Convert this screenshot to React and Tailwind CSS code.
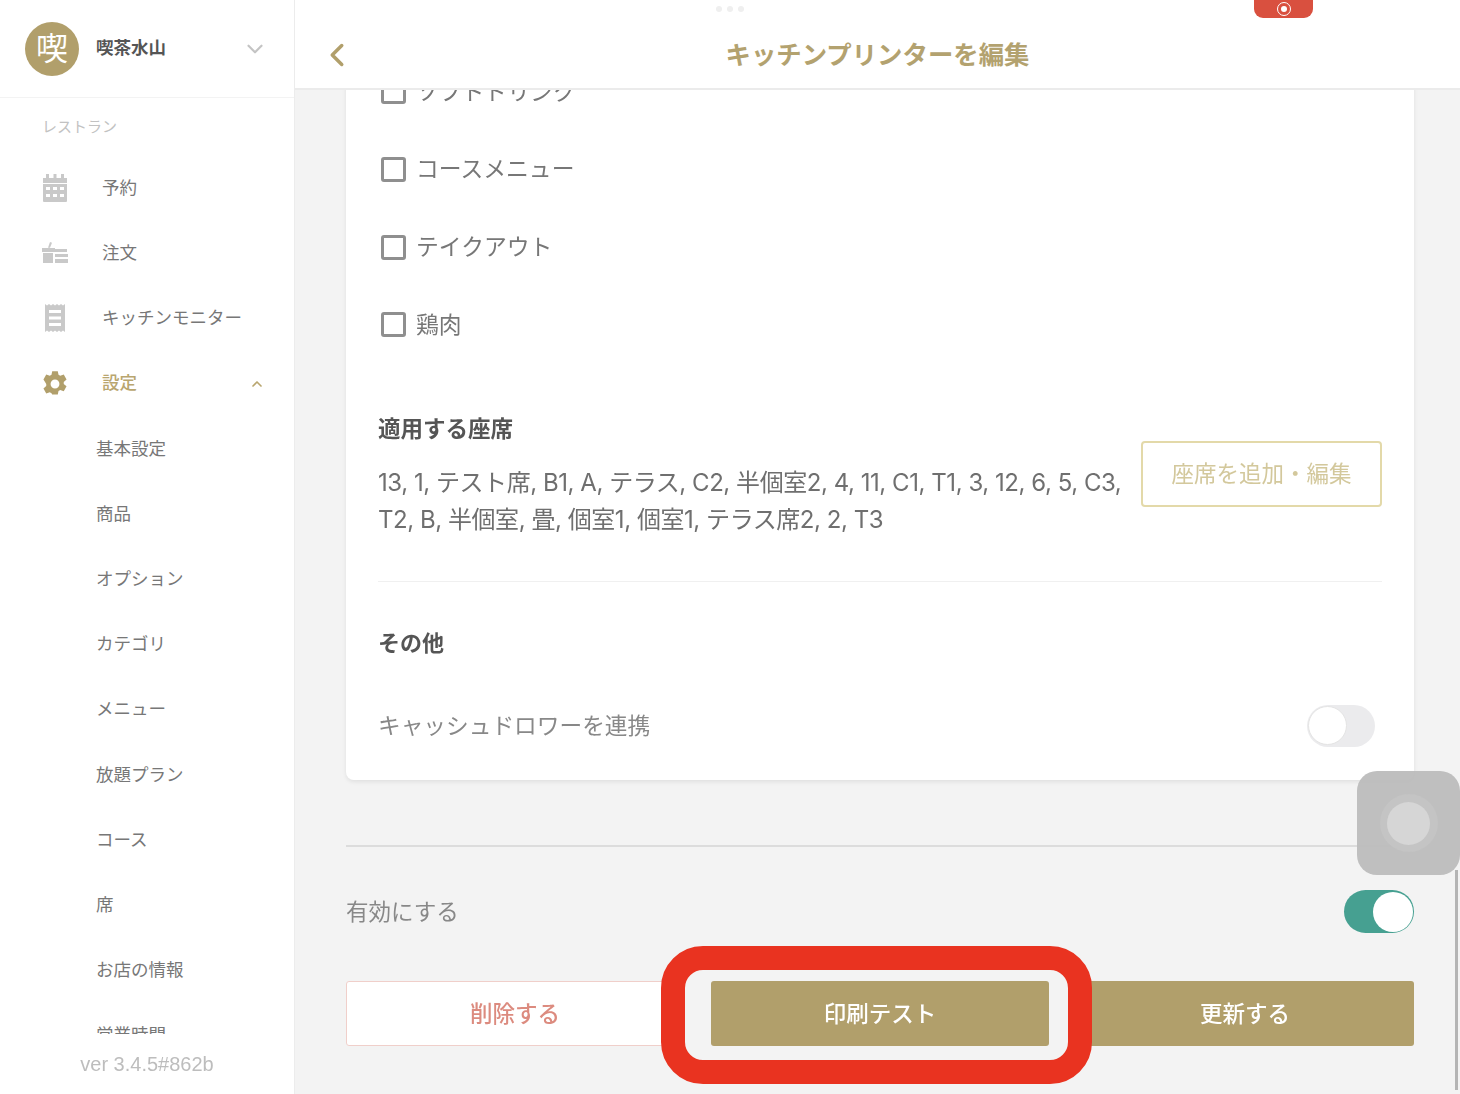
import { ChevronDown, ChevronUp, ChevronLeft } from 'lucide-react';

const subItems = ['基本設定', '商品', 'オプション', 'カテゴリ', 'メニュー', '放題プラン', 'コース', '席', 'お店の情報', '営業時間'];
const categories = ['ソフトドリンク', 'コースメニュー', 'テイクアウト', '鶏肉'];

const CalendarIcon = () => (
  <svg width="28" height="30" viewBox="0 0 28 30" fill="#c9c9c9">
    <rect x="5" y="1" width="3" height="6" />
    <rect x="12.5" y="1" width="3" height="6" />
    <rect x="20" y="1" width="3" height="6" />
    <path d="M2 5h24v5H2z" />
    <path fillRule="evenodd" d="M2 11h24v17a1 1 0 0 1-1 1H3a1 1 0 0 1-1-1zM5 14v3h4v-3zm7 0v3h4v-3zm7 0v3h4v-3zM5 21v3h4v-3zm7 0v3h4v-3zm7 0v3h4v-3z" />
  </svg>
);

const OrderIcon = () => (
  <svg width="28" height="24" viewBox="0 0 28 24" fill="#c9c9c9">
    <path d="M9 1l2 .8-2 5H7z" />
    <rect x="1" y="7" width="13" height="4" />
    <rect x="2" y="12" width="10" height="10" />
    <rect x="14" y="8" width="12" height="3" />
    <rect x="14" y="13" width="13" height="3" />
    <rect x="14" y="18" width="13" height="4" />
  </svg>
);

const ReceiptIcon = () => (
  <svg width="22" height="30" viewBox="0 0 22 30" fill="#c9c9c9">
    <path fillRule="evenodd" d="M1 1l2 1.5L5 1l2 1.5L9 1l2 1.5L13 1l2 1.5L17 1l2 1.5L21 1v28l-2-1.5-2 1.5-2-1.5-2 1.5-2-1.5L9 29l-2-1.5L5 29l-2-1.5L1 29zM5 7v3h12V7zm0 6.5v3h12v-3zM5 20v3h12v-3z" />
  </svg>
);

const GearIcon = () => (
  <svg width="28" height="28" viewBox="0 0 24 24" fill="#b19f6b">
    <path fillRule="evenodd" d="M9.6 1h4.8l.6 3.1 1.5.9 3-1.1 2.4 4.2-2.4 2.1v1.7l2.4 2.1-2.4 4.2-3-1.1-1.5.9-.6 3.1H9.6L9 19.9l-1.5-.9-3 1.1-2.4-4.2 2.4-2.1v-1.7L2.1 8.1l2.4-4.2 3 1.1L9 4.1zM12 8.2a3.8 3.8 0 1 0 0 7.6 3.8 3.8 0 0 0 0-7.6z" />
  </svg>
);

function NavItem({ icon, label, active, right }) {
  return (
    <div className="h-[65.3px] flex items-center">
      <div className="w-[60px] flex justify-center shrink-0 mr-[17px]">{icon}</div>
      <span className={`text-[17.5px] ${active ? 'text-[#b9a66f] font-medium' : 'text-[#777]'}`}>{label}</span>
      {right}
    </div>
  );
}

function Sidebar() {
  return (
    <aside className="w-[295px] shrink-0 h-full bg-white flex flex-col border-r-[1px] border-[#ececec]">
      <div className="h-[98px] shrink-0 border-b border-[#f3f3f3] flex items-center pl-[25px] pr-[26px]">
        <div className="w-[54px] h-[54px] rounded-full bg-[#b19f6b] text-white text-[32px] flex items-center justify-center">喫</div>
        <span className="ml-[17px] text-[17.5px] font-bold text-[#555]">喫茶水山</span>
        <ChevronDown className="ml-auto text-[#c4c4c4]" size={26} strokeWidth={2} />
      </div>
      <div className="h-[936px] overflow-hidden pl-[25px]">
        <div className="pl-[17px] pt-[19px] pb-[18px] text-[15px] leading-[20px] text-[#c2c2c2]">レストラン</div>
        <NavItem icon={<CalendarIcon />} label="予約" />
        <NavItem icon={<OrderIcon />} label="注文" />
        <NavItem icon={<ReceiptIcon />} label="キッチンモニター" />
        <NavItem
          icon={<GearIcon />}
          label="設定"
          active
          right={<ChevronUp className="ml-auto mr-[29px] text-[#b9a66f]" size={16} strokeWidth={2.5} />}
        />
        {subItems.map((s) => (
          <div key={s} className="h-[65.2px] flex items-center pl-[71px] text-[17.5px] text-[#777]">
            {s}
          </div>
        ))}
      </div>
      <div className="flex-1 text-center text-[20px] leading-[60px] text-[#bdbdbd] font-['Liberation_Sans',sans-serif]">ver 3.4.5#862b</div>
    </aside>
  );
}

function Toggle({ on }) {
  return on ? (
    <div className="w-[70px] h-[43px] rounded-full bg-[#46a091] flex items-center justify-end pr-[1px]">
      <div className="w-[40px] h-[40px] rounded-full bg-white" />
    </div>
  ) : (
    <div className="w-[68px] h-[42px] rounded-full bg-[#ebebed] flex items-center pl-[1px]">
      <div className="w-[39px] h-[39px] rounded-full bg-white border border-[#e4e4e4]" />
    </div>
  );
}

function CheckRow({ label }) {
  return (
    <div className="h-[77.7px] flex items-center gap-[10px] pl-[3px]">
      <div className="w-[25px] h-[25px] rounded-[3px] border-[3px] border-[#8f8f8f] bg-white" />
      <span className="text-[22.8px] text-[#777]">{label}</span>
    </div>
  );
}

function Card() {
  return (
    <div className="bg-white rounded-b-[8px] shadow-[0_2px_4px_rgba(0,0,0,0.08)] px-[32px] -mt-[37px] h-[727px]">
      {categories.map((c) => (
        <CheckRow key={c} label={c} />
      ))}
      <div className="pt-[47px] text-[22.5px] leading-[36px] font-bold text-[#555]">適用する座席</div>
      <div className="flex items-start mt-[-6px] h-[100px]">
        <p className="flex-1 text-[24px] leading-[37px] text-[#6f6f6f] pt-[23px] whitespace-nowrap tracking-[-0.45px]">
          13, 1, テスト席, B1, A, テラス, C2, 半個室2, 4, 11, C1, T1, 3, 12, 6, 5, C3,
          <br />
          T2, B, 半個室, 畳, 個室1, 個室1, テラス席2, 2, T3
        </p>
        <button className="w-[241px] h-[66px] rounded-[4px] border-2 border-[#e3d9a9] text-[22.5px] text-[#d3c89c] bg-white">座席を追加・編集</button>
      </div>
      <div className="mt-[40px] border-t border-[#f0f0f0]" />
      <div className="pt-[43px] text-[22px] leading-[36px] font-bold text-[#555]">その他</div>
      <div className="mt-[44px] flex items-center justify-between pr-[7px]">
        <span className="text-[22.7px] text-[#888]">キャッシュドロワーを連携</span>
        <Toggle />
      </div>
    </div>
  );
}

function Main() {
  return (
    <main className="flex-1 min-w-0 h-full flex flex-col">
      <header className="relative z-10 h-[90px] shrink-0 bg-white border-b-2 border-[#ebebeb] flex items-center justify-center pt-[22px]">
        <ChevronLeft className="absolute left-[23px] top-[36px] text-[#b19f6b]" size={38} strokeWidth={2.2} />
        <h1 className="text-[25.4px] font-bold text-[#b3a26f]">キッチンプリンターを編集</h1>
      </header>
      <div className="flex-1 overflow-hidden px-[51px] pr-[46px]">
        <Card />
        <div className="mt-[65px] border-t-2 border-[#dcdcdc]" />
        <div className="mt-[43px] h-[43px] flex items-center justify-between">
          <span className="text-[22.5px] leading-[40px] text-[#888]">有効にする</span>
          <Toggle on />
        </div>
        <div className="mt-[48px] grid grid-cols-3 gap-[27px]">
          <button className="h-[65px] rounded-[3px] bg-white border border-[#f0cfca] text-[22.5px] font-medium text-[#dc8b7f]">削除する</button>
          <button className="h-[65px] rounded-[3px] bg-[#b19f6b] text-[22.5px] font-medium text-white">印刷テスト</button>
          <button className="h-[65px] rounded-[3px] bg-[#b19f6b] text-[22.5px] font-medium text-white">更新する</button>
        </div>
      </div>
    </main>
  );
}

export default function App() {
  return (
    <div className="relative w-[1460px] h-[1094px] overflow-hidden bg-[#f3f3f3] font-['Inter','Noto_Sans_CJK_JP',sans-serif]">
      <div className="flex h-full blur-[0.6px]">
        <Sidebar />
        <Main />
      </div>

      {/* iPad status bar bits */}
      <div className="absolute left-[716px] top-[6px] flex gap-[5px]">
        <div className="w-[6px] h-[6px] rounded-full bg-[#efefef]" />
        <div className="w-[6px] h-[6px] rounded-full bg-[#efefef]" />
        <div className="w-[6px] h-[6px] rounded-full bg-[#efefef]" />
      </div>
      <div className="absolute left-[1254px] top-0 w-[59px] h-[18px] rounded-b-[9px] bg-[#d9503f] flex items-center justify-center">
        <div className="w-[14px] h-[14px] rounded-full border-[1.5px] border-white flex items-center justify-center">
          <div className="w-[6px] h-[6px] rounded-full bg-white" />
        </div>
      </div>

      {/* assistive touch */}
      <div className="absolute left-[1357px] top-[771px] w-[103px] h-[104px] rounded-[20px] bg-[#bcbcbc]/95 flex items-center justify-center blur-[0.4px]">
        <div className="w-[58px] h-[58px] rounded-full bg-[#c4c4c4] flex items-center justify-center">
          <div className="w-[43px] h-[43px] rounded-full bg-[#d6d6d6]" />
        </div>
      </div>
      <div className="absolute left-[1455px] top-[870px] w-[3px] h-[220px] bg-[#b4b4b4]" />

      {/* red highlight round the print button */}
      <div className="absolute left-[661px] top-[946px] w-[431px] h-[138px] rounded-[42px] border-[24px] border-[#e93320]" />
    </div>
  );
}
